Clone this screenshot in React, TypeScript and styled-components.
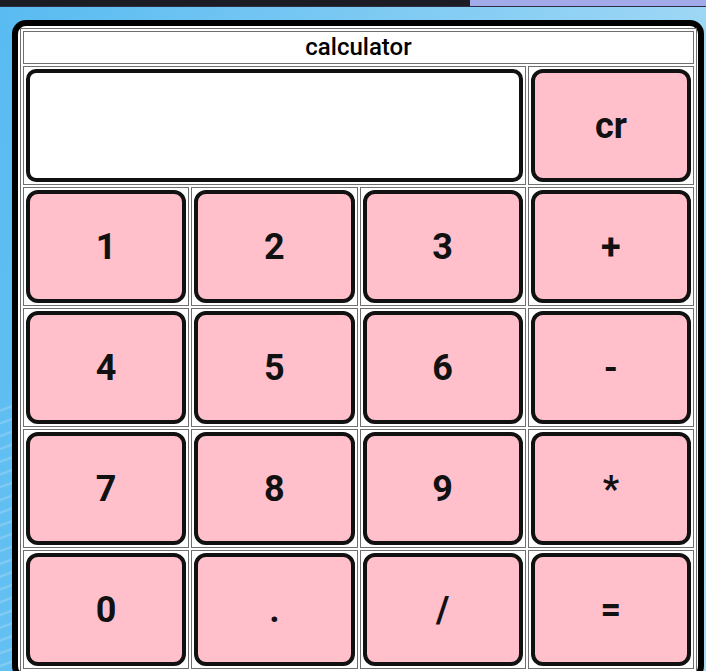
import React from "react";
import styled, { createGlobalStyle } from "styled-components";

const Global = createGlobalStyle`
  html, body { margin: 0; padding: 0; }
  body { font-family: Roboto, "Liberation Sans", sans-serif; overflow: hidden; }
`;

const Page = styled.div`
  width: 706px;
  height: 671px;
  overflow: hidden;
  display: flex;
  flex-direction: column;
  background:
    repeating-linear-gradient(160deg, rgba(255,255,255,0) 0px, rgba(255,255,255,0) 8px, rgba(255,255,255,0.22) 10px, rgba(255,255,255,0) 12px) 0 400px / 14px 271px no-repeat,
    linear-gradient(100deg, #58bbf1 0%, #78c8f3 40%, #a9dbf6 100%);
`;

const TopBar = styled.div`
  display: flex;
  height: 6px;
  flex: none;
  border-bottom: 1px solid #2a2f45;
`;

const BarDark = styled.div`
  flex: 1;
  background: #1c1d24;
`;

const BarLight = styled.div`
  width: 236px;
  background: #a3aaea;
`;

const Card = styled.div`
  margin: 13px 2px 0 12px;
  border: 6px solid #000;
  border-radius: 14px;
  background: #fff;
  padding: 2px 1px 2px 2px;
`;

const Table = styled.table`
  width: 100%;
  border: 1px solid #6e6e6e;
  border-spacing: 2px;
  table-layout: fixed;
`;

const TitleCell = styled.th`
  border: 1px solid #6e6e6e;
  padding: 1px 0 2px;
  font-family: Roboto, "Liberation Sans", sans-serif;
  font-size: 24px;
  font-weight: 500;
  color: #000;
  line-height: 28px;
`;

const Cell = styled.td`
  border: 1px solid #6e6e6e;
  padding: 2px;
`;

const Display = styled.input`
  display: block;
  box-sizing: border-box;
  width: 100%;
  height: 113px;
  border: 4px solid #111;
  border-radius: 10px;
  background: #fff;
  outline: none;
`;

const Key = styled.button`
  display: block;
  box-sizing: border-box;
  width: 100%;
  height: 113px;
  border: 4px solid #111;
  border-radius: 12px;
  background: #ffc0cb;
  color: #111;
  font-family: Roboto, "Liberation Sans", sans-serif;
  font-size: 36px;
  font-weight: 700;
  cursor: pointer;
  padding: 0;
`;

const rows = [
  ["1", "2", "3", "+"],
  ["4", "5", "6", "-"],
  ["7", "8", "9", "*"],
  ["0", ".", "/", "="],
];

export default function App() {
  return (
    <>
      <Global />
      <Page>
        <TopBar>
          <BarDark />
          <BarLight />
        </TopBar>
        <Card>
          <Table>
            <tbody>
              <tr>
                <TitleCell colSpan={4}>calculator</TitleCell>
              </tr>
              <tr>
                <Cell colSpan={3}>
                  <Display type="text" readOnly />
                </Cell>
                <Cell>
                  <Key>cr</Key>
                </Cell>
              </tr>
              {rows.map((r, i) => (
                <tr key={i}>
                  {r.map((k) => (
                    <Cell key={k}>
                      <Key>{k}</Key>
                    </Cell>
                  ))}
                </tr>
              ))}
            </tbody>
          </Table>
        </Card>
      </Page>
    </>
  );
}
